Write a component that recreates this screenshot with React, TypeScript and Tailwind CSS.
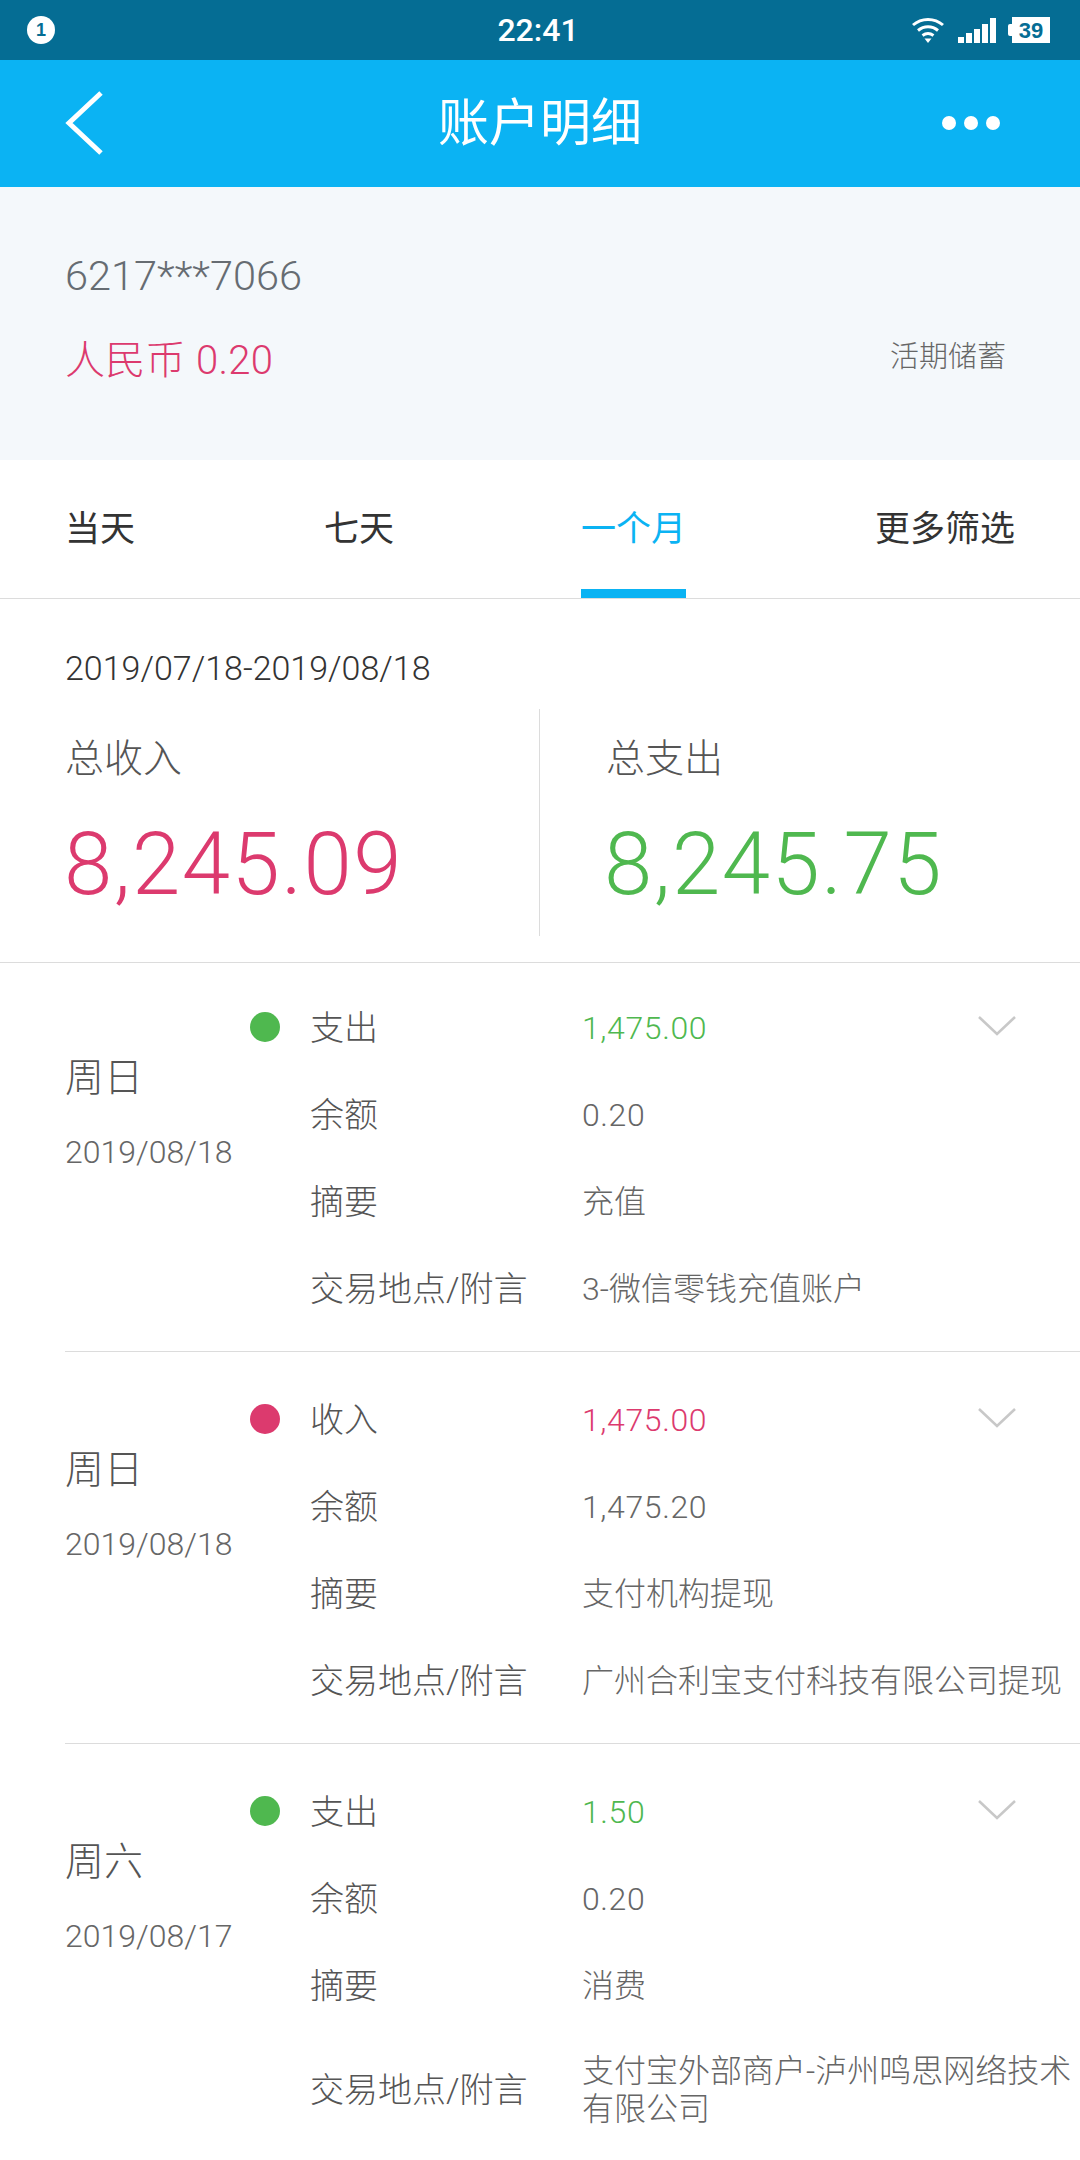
import React from "react";

const FONT = "font-['Roboto','Noto_Sans_CJK_SC',sans-serif] font-light";

type Tx = { day: string; date: string; type: string; amount: string; color: string; dot: string; balance: string; memo: string; place: string; last?: boolean; first?: boolean };

const txs: Tx[] = [
  { day: "周日", date: "2019/08/18", type: "支出", amount: "1,475.00", color: "text-[#4fb84f]", dot: "bg-[#4fb84f]", balance: "0.20", memo: "充值", place: "3-微信零钱充值账户", first: true },
  { day: "周日", date: "2019/08/18", type: "收入", amount: "1,475.00", color: "text-[#dc3a6e]", dot: "bg-[#dc3a6e]", balance: "1,475.20", memo: "支付机构提现", place: "广州合利宝支付科技有限公司提现" },
  { day: "周六", date: "2019/08/17", type: "支出", amount: "1.50", color: "text-[#4fb84f]", dot: "bg-[#4fb84f]", balance: "0.20", memo: "消费", place: "支付宝外部商户-泸州鸣思网络技术有限公司", last: true },
];

function Row({ label, children, cls }: { label: string; children: React.ReactNode; cls: string }) {
  return (
    <div className={`flex items-center ${cls}`}>
      <div className="w-[272px] shrink-0 text-[34px] leading-[40px] text-[#555]">{label}</div>
      <div className="flex-1 text-[32px] leading-[38px] text-[#666]">{children}</div>
    </div>
  );
}

function Item({ t }: { t: Tx }) {
  return (
    <div className={`ml-[65px] flex h-[389px] ${t.first ? "" : "mt-[3px]"} ${t.last ? "" : "border-b border-[#dcdcdc]"}`}>
      <div className="w-[185px] shrink-0 pt-[92px]">
        <div className="text-[39px] leading-[46px] text-[#555]">{t.day}</div>
        <div className="mt-[31px] text-[32px] leading-[40px] text-[#666]">{t.date}</div>
      </div>
      <div className="w-[60px] shrink-0 pt-[49px]">
        <div className={`h-[30px] w-[30px] rounded-full ${t.dot}`} />
      </div>
      <div className="relative flex-1 pt-[45px]">
        <Row label={t.type} cls="h-[40px]"><span className={`tracking-[0.6px] ${t.color}`}>{t.amount}</span></Row>
        <Row label="余额" cls="mt-[47px] h-[40px]"><span className="tracking-[0.6px]">{t.balance}</span></Row>
        <Row label="摘要" cls="mt-[47px] h-[40px]">{t.memo}</Row>
        <Row label="交易地点/附言" cls={t.last ? "mt-[46px] h-[76px]" : "mt-[47px] h-[40px]"}>{t.place}</Row>
        <svg className="absolute right-[64px] top-[52px]" width="38" height="22" viewBox="0 0 38 22" fill="none" stroke="#c8c8c8" strokeWidth="2.5">
          <path d="M1 2 L19 19 L37 2" />
        </svg>
      </div>
    </div>
  );
}

export default function App() {
  return (
    <div className={`${FONT} flex h-[2160px] w-[1080px] flex-col overflow-hidden bg-white`}>
      <div className="grid h-[60px] grid-cols-3 items-center bg-[#056d94] pl-[27px] pr-[30px] text-white">
        <div className="flex h-[28px] w-[28px] items-center justify-center rounded-full bg-white font-['Liberation_Sans'] text-[18px] font-bold text-[#056d94]">1</div>
        <div className="ml-[-1px] text-center text-[32px] font-medium">22:41</div>
        <div className="flex items-center justify-end gap-[12px]">
          <svg className="mr-[2px]" width="32" height="26" viewBox="0 0 32 26" fill="none" stroke="white" strokeWidth="3">
            <path d="M1 8 C9.5 0.5 22.5 0.5 31 8" />
            <path d="M6 13.5 C12 8.5 20 8.5 26 13.5" />
            <path d="M10.5 18.5 C14 16 18 16 21.5 18.5" />
            <path d="M12.5 21.5 L19.5 21.5 L16 26 Z" fill="white" stroke="none" />
          </svg>
          <svg width="38" height="25" viewBox="0 0 38 25" fill="white">
            <rect x="0" y="19" width="6" height="6" />
            <rect x="8" y="15" width="6" height="10" />
            <rect x="16" y="11" width="6" height="14" />
            <rect x="24" y="6" width="6" height="19" />
            <rect x="32" y="0" width="6" height="25" />
          </svg>
          <div className="flex items-center">
            <div className="h-[12px] w-[4px] rounded-l-[2px] bg-white" />
            <div className="flex h-[26px] w-[38px] items-center justify-center bg-white font-['Liberation_Sans'] text-[22px] font-bold text-[#056d94]">39</div>
          </div>
        </div>
      </div>
      <div className="relative flex h-[127px] items-center justify-center bg-[#0bb3f3]">
        <svg className="absolute left-[63px] top-[30px]" width="42" height="66" viewBox="0 0 42 66" fill="none" stroke="white" strokeWidth="5">
          <path d="M38 3 L6 33 L38 63" />
        </svg>
        <div className="mt-[2px] text-[51px] font-normal text-white">账户明细</div>
        <div className="absolute right-[80px] top-[56px] flex gap-[8px]">
          <div className="h-[14px] w-[14px] rounded-full bg-white" />
          <div className="h-[14px] w-[14px] rounded-full bg-white" />
          <div className="h-[14px] w-[14px] rounded-full bg-white" />
        </div>
      </div>
      <div className="flex h-[273px] flex-col bg-[#f4f8fb] pl-[65px] pr-[74px] pt-[64px]">
        <div className="text-[41.5px] leading-[50px] text-[#666c72]">6217***7066</div>
        <div className="mt-[35px] flex items-center justify-between">
          <div className="text-[40px] leading-[50px] tracking-[0.3px] text-[#dc3a6e]">人民币 0.20</div>
          <div className="mb-[8px] text-[29px] leading-[40px] text-[#666]">活期储蓄</div>
        </div>
      </div>
      <div className="relative flex h-[139px] items-center border-b border-[#dcdcdc] pt-[2px] text-[35px] font-normal text-[#333]">
        <div className="ml-[65px] w-[259px]">当天</div>
        <div className="w-[257px]">七天</div>
        <div className="w-[294px] text-[#0bb3f3]">一个月</div>
        <div>更多筛选</div>
        <div className="absolute bottom-0 left-[581px] h-[9px] w-[105px] bg-[#0bb3f3]" />
      </div>
      <div className="flex h-[364px] flex-col border-b border-[#dcdcdc]">
        <div className="px-[65px] pt-[49px] text-[34px] leading-[40px] text-[#333]">2019/07/18-2019/08/18</div>
        <div className="mt-[21px] flex">
          <div className="h-[227px] w-[540px] border-r border-[#dcdcdc] pl-[65px] pt-[27px]">
            <div className="text-[39px] leading-[46px] text-[#555]">总收入</div>
            <div className="ml-[-1px] mt-[32px] text-[87px] leading-[100px] tracking-[1.5px] text-[#dc3a6e]">8,245.09</div>
          </div>
          <div className="pl-[66px] pt-[27px]">
            <div className="text-[39px] leading-[46px] text-[#555]">总支出</div>
            <div className="ml-[-2px] mt-[32px] text-[87px] leading-[100px] tracking-[1.5px] text-[#4fb84f]">8,245.75</div>
          </div>
        </div>
      </div>
      {txs.map((t, i) => <Item key={i} t={t} />)}
    </div>
  );
}
